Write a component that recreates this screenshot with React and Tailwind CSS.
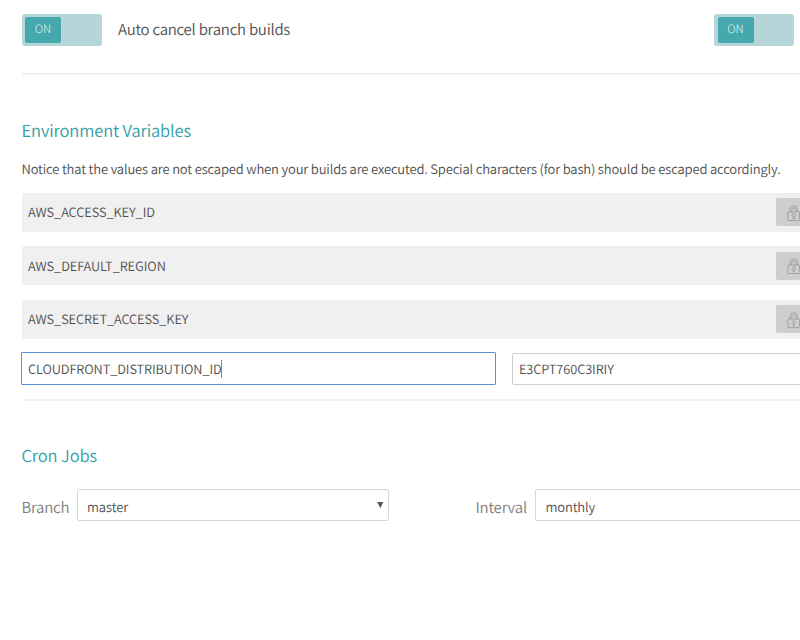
import React from "react";

function Toggle() {
  return (
    <div className="flex h-8 w-20 shrink-0 rounded-[3px] bg-[#b5d5d8] p-[3px] pl-[3.5px]">
      <div className="flex h-[26px] w-9 items-center justify-center rounded-[2px] bg-[#45a8ad] text-[11.5px] font-light text-[#e0f3f4]">
        ON
      </div>
    </div>
  );
}

function Lock() {
  return (
    <svg className="mt-0.5 ml-[11px] shrink-0" width="14" height="17" viewBox="0 0 14 17" fill="none" stroke="#a0a0a0" strokeWidth="1">
      <rect x="0.8" y="7" width="11.8" height="8.6" rx="1" />
      <path d="M2.9 7V4.6a3.8 3.8 0 0 1 7.6 0V7M4.7 7V4.8a2 2 0 0 1 4 0V7" />
      <path d="M6.1 13.8V11.6a1.5 1.5 0 1 1 1.3 0v2.2z" />
    </svg>
  );
}

function SavedVariable({ name }) {
  return (
    <div className="flex h-[39px] w-[800px] items-center rounded-[2px] bg-[#f0f0f0] pl-[6.5px]">
      <div className="w-[748px] shrink-0 text-[12.8px] leading-5 tracking-[-0.08px]">{name}</div>
      <div className="flex h-7 w-9 shrink-0 items-center rounded-[2px] bg-[#cecece]">
        <Lock />
      </div>
    </div>
  );
}

export default function App() {
  return (
    <div className="h-[640px] w-[800px] overflow-hidden bg-white pl-[21.5px] font-['Noto_Sans_CJK_SC','Noto_Sans',sans-serif] font-[350] whitespace-nowrap text-[#505050] [text-rendering:geometricPrecision]">
      <div className="flex h-[73px] items-start pt-[13.5px]">
        <Toggle />
        <div className="ml-[16.5px] w-[596px] text-[15px] leading-8 tracking-[-0.24px]">Auto cancel branch builds</div>
        <Toggle />
      </div>
      <div className="h-[2px] w-[800px] bg-[#f0f0f0]" />

      <h2 className="mt-[42.5px] text-[16.5px] leading-6 tracking-[-0.12px] text-[#30a0a5]">Environment Variables</h2>
      <p className="mt-[17px] text-[13px] leading-5 tracking-[-0.155px]">
        Notice that the values are not escaped when your builds are executed. Special characters (for bash) should be escaped accordingly.
      </p>
      <div className="mt-[14px] flex flex-col gap-[14.5px]">
        <SavedVariable name="AWS_ACCESS_KEY_ID" />
        <SavedVariable name="AWS_DEFAULT_REGION" />
        <SavedVariable name="AWS_SECRET_ACCESS_KEY" />
      </div>
      <div className="mt-[13.5px] -ml-[0.5px] flex items-center gap-4 text-[12.8px] tracking-[-0.1px]">
        <div className="flex h-[33px] w-[475px] shrink-0 items-center rounded-[1px] border border-[#5b8fd0] pl-1.5">
          CLOUDFRONT_DISTRIBUTION_ID
          <span className="-ml-px h-[18px] w-[1.5px] bg-[#888888]" />
        </div>
        <div className="flex h-8 w-[475px] shrink-0 items-center rounded-[2px] border border-[#cfcfcf] pl-1.5">E3CPT760C3IRIY</div>
      </div>
      <div className="mt-[14px] h-[2px] w-[800px] bg-[#f0f0f0]" />

      <h2 className="mt-[42px] text-[16.5px] leading-6 tracking-[-0.12px] text-[#30a0a5]">Cron Jobs</h2>
      <div className="mt-[22px] flex h-8 items-center">
        <div className="mt-1.5 w-[55px] shrink-0 text-[15px] tracking-[-0.24px] text-[#808080]">Branch</div>
        <div className="flex h-8 w-[312px] shrink-0 items-center justify-between rounded-[2px] border border-[#d8d8d8] pr-1 pl-[9.5px] text-[13px] tracking-[-0.1px]">
          <span className="mt-[3px]">master</span>
          <svg width="7" height="8" viewBox="0 0 7 8" fill="#555555"><path d="M0.3 1h6L3.3 7.2z" /></svg>
        </div>
        <div className="mt-1.5 ml-[87px] w-[59px] shrink-0 text-[15px] tracking-[-0.2px] text-[#808080]">Interval</div>
        <div className="flex h-8 w-[312px] shrink-0 items-center rounded-[2px] border border-[#d8d8d8] pl-2.5 text-[13px] tracking-[-0.15px]">
          <span className="mt-[3px]">monthly</span>
        </div>
      </div>
    </div>
  );
}
